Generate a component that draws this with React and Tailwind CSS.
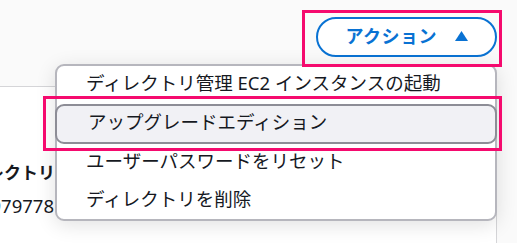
import React from "react";

const menuItems = [
    "ディレクトリ管理 EC2 インスタンスの起動",
    "アップグレードエディション",
    "ユーザーパスワードをリセット",
    "ディレクトリを削除",
];

const App = () => {
    const highlighted = 1;

    return (
        <div
            className="relative w-[517px] h-[243px] overflow-hidden bg-[#fafafa] text-[#16191f]"
            style={{ fontFamily: '"Noto Sans", "Noto Sans CJK JP", sans-serif' }}
        >
            {/* header bar with the actions button */}
            <div className="h-[86px] flex justify-end items-start pt-[17px] pr-[20px]">
                <button className="h-[40px] flex items-center gap-[18px] px-[27px] pb-[2px] rounded-full border-2 border-[#0972d3] bg-white text-[#0972d3] text-[18px] font-bold tracking-[0.5px]">
                    <span>アクション</span>
                    <svg width="13" height="10" viewBox="0 0 13 10">
                        <path d="M6.5 0 L13 10 L0 10 Z" fill="#0972d3" />
                    </svg>
                </button>
            </div>

            {/* card below the header */}
            <div className="w-[497px] h-[157px] bg-white border-t border-r border-[#d5d5d8]">
                <div className="w-[55px] pt-[73px] flex flex-col items-end whitespace-nowrap">
                    <div className="text-[17px] font-bold leading-[26px]">ディレクトリ</div>
                    <div className="text-[18.5px] leading-[26px] mt-[7px] mr-[1px]">d-9067979778</div>
                </div>
            </div>

            {/* dropdown menu */}
            <div className="absolute left-[55px] top-[64px] w-[442px] h-[157px] rounded-[9px] border-2 border-[#b6b6bd] bg-white shadow-[0_4px_20px_rgba(0,0,0,0.12)]">
                {menuItems.map((item, i) =>
                    i === highlighted ? (
                        <div
                            key={item}
                            className="-mx-[2px] h-[40px] flex items-center pl-[31px] pb-[5px] rounded-[9px] border-2 border-[#8d8d96] bg-[#f1f1f5] text-[18.5px] whitespace-nowrap"
                        >
                            {item}
                        </div>
                    ) : (
                        <div
                            key={item}
                            className="h-[38px] flex items-center pl-[29px] pb-[5px] text-[18.5px] whitespace-nowrap"
                        >
                            {item}
                        </div>
                    )
                )}
            </div>

            {/* annotation frames */}
            <div className="absolute left-[302px] top-[10px] w-[200px] h-[57px] border-[3px] border-[#f50a6e]" />
            <div className="absolute left-[43px] top-[96px] w-[459px] h-[55px] border-[3px] border-[#f50a6e]" />
        </div>
    );
};

export default App;
